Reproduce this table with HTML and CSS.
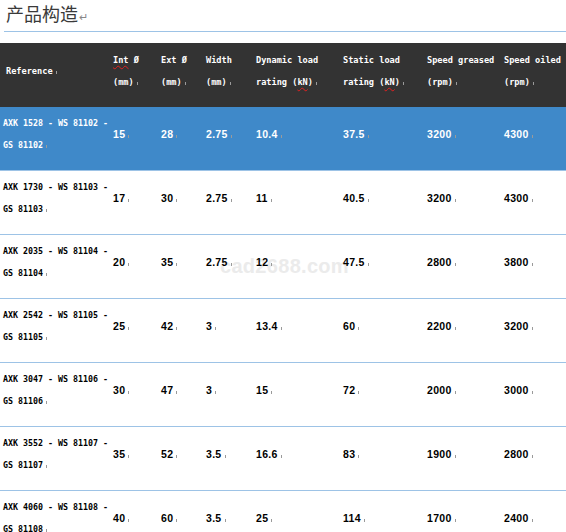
FILE: index.html
```html
<!DOCTYPE html>
<html lang="zh">
<head>
<meta charset="utf-8">
<link rel="stylesheet" href="styles.css">
</head>
<body>
<div class="page">
  <div class="title">产品构造<span class="ret">↵</span></div>
  <table class="spec">
    <colgroup>
      <col style="width:110px"><col style="width:48px"><col style="width:45px"><col style="width:50px"><col style="width:87px"><col style="width:84px"><col style="width:77px"><col>
    </colgroup>
    <thead>
      <tr>
        <th class="ref">Reference<span class="m"></span></th>
        <th><span class="sp">Int</span> Ø<br>(mm)<span class="m"></span></th>
        <th>Ext Ø<br>(mm)<span class="m"></span></th>
        <th>Width<br>(mm)<span class="m"></span></th>
        <th>Dynamic load<br>rating (<span class="sp">kN</span>)<span class="m"></span></th>
        <th>Static load<br>rating (<span class="sp">kN</span>)<span class="m"></span></th>
        <th>Speed greased<br>(rpm)<span class="m"></span></th>
        <th>Speed oiled<br>(rpm)<span class="m"></span></th>
      </tr>
    </thead>
    <tbody>
      <tr class="sel">
        <td class="ref">AXK 1528 - WS 81102 -<br>GS 81102<span class="m"></span></td>
        <td>15<span class="m"></span></td><td>28<span class="m"></span></td><td>2.75<span class="m"></span></td><td>10.4<span class="m"></span></td><td>37.5<span class="m"></span></td><td>3200<span class="m"></span></td><td>4300<span class="m"></span></td>
      </tr>
      <tr>
        <td class="ref">AXK 1730 - WS 81103 -<br>GS 81103<span class="m"></span></td>
        <td>17<span class="m"></span></td><td>30<span class="m"></span></td><td>2.75<span class="m"></span></td><td>11<span class="m"></span></td><td>40.5<span class="m"></span></td><td>3200<span class="m"></span></td><td>4300<span class="m"></span></td>
      </tr>
      <tr>
        <td class="ref">AXK 2035 - WS 81104 -<br>GS 81104<span class="m"></span></td>
        <td>20<span class="m"></span></td><td>35<span class="m"></span></td><td>2.75<span class="m"></span></td><td>12<span class="m"></span></td><td>47.5<span class="m"></span></td><td>2800<span class="m"></span></td><td>3800<span class="m"></span></td>
      </tr>
      <tr>
        <td class="ref">AXK 2542 - WS 81105 -<br>GS 81105<span class="m"></span></td>
        <td>25<span class="m"></span></td><td>42<span class="m"></span></td><td>3<span class="m"></span></td><td>13.4<span class="m"></span></td><td>60<span class="m"></span></td><td>2200<span class="m"></span></td><td>3200<span class="m"></span></td>
      </tr>
      <tr>
        <td class="ref">AXK 3047 - WS 81106 -<br>GS 81106<span class="m"></span></td>
        <td>30<span class="m"></span></td><td>47<span class="m"></span></td><td>3<span class="m"></span></td><td>15<span class="m"></span></td><td>72<span class="m"></span></td><td>2000<span class="m"></span></td><td>3000<span class="m"></span></td>
      </tr>
      <tr>
        <td class="ref">AXK 3552 - WS 81107 -<br>GS 81107<span class="m"></span></td>
        <td>35<span class="m"></span></td><td>52<span class="m"></span></td><td>3.5<span class="m"></span></td><td>16.6<span class="m"></span></td><td>83<span class="m"></span></td><td>1900<span class="m"></span></td><td>2800<span class="m"></span></td>
      </tr>
      <tr>
        <td class="ref">AXK 4060 - WS 81108 -<br>GS 81108<span class="m"></span></td>
        <td>40<span class="m"></span></td><td>60<span class="m"></span></td><td>3.5<span class="m"></span></td><td>25<span class="m"></span></td><td>114<span class="m"></span></td><td>1700<span class="m"></span></td><td>2400<span class="m"></span></td>
      </tr>
    </tbody>
  </table>
  <div class="wm">cad2688.com</div>
</div>
</body>
</html>
```

FILE: styles.css
```css
html, body {
  margin: 0;
  padding: 0;
  background: #ffffff;
}
.page {
  position: relative;
  width: 566px;
  height: 532px;
  overflow: hidden;
}
.title {
  height: 32px;
  margin-left: 4px;
  padding-left: 2px;
  border-bottom: 1px solid #9dc3e6;
  box-sizing: border-box;
  font-family: "Noto Sans CJK SC", sans-serif;
  font-size: 18px;
  line-height: 26px;
  color: #3a3a3a;
  margin-bottom: 11px;
}
.title .ret {
  font-size: 11px;
  color: #888;
  margin-left: 1px;
}
.spec {
  position: relative;
  z-index: 1;
  border-collapse: collapse;
  table-layout: fixed;
  width: 566px;
  font-family: "DejaVu Sans Mono", monospace;
  font-weight: bold;
  font-size: 8.6px;
}
.spec th {
  background: #333333;
  color: #ffffff;
  text-align: left;
  vertical-align: middle;
  height: 64px;
  box-sizing: border-box;
  padding: 0 2px 8px 3px;
  line-height: 22px;
  white-space: nowrap;
  font-weight: bold;
}
.spec th.ref {
  padding-left: 6px;
}
.spec td {
  height: 62.6px;
  box-sizing: border-box;
  padding: 5px 2px 14px 3px;
  vertical-align: middle;
  line-height: 22px;
  white-space: nowrap;
  color: #000;
  border-bottom: 1px solid #9dc3e6;
  font-family: "Liberation Sans", Arial, sans-serif;
  font-size: 10.5px;
  letter-spacing: 0.3px;
}
.spec td.ref {
  font-family: "DejaVu Sans Mono", monospace;
  font-size: 8.3px;
  letter-spacing: 0;
  padding-left: 3px;
}
.spec tr.sel td {
  background: #3f89c9;
  color: #ffffff;
  height: 62px;
}
.sp {
  text-decoration: underline wavy #e02020;
  text-decoration-thickness: 1px;
  text-underline-offset: 2px;
}
.m {
  display: inline-block;
  width: 2px;
  height: 3px;
  margin-left: 1px;
  border-right: 1px solid #9a9a9a;
  vertical-align: baseline;
}
.wm {
  position: absolute;
  z-index: 0;
  left: 220px;
  top: 255px;
  font-family: "Liberation Sans", Arial, sans-serif;
  font-weight: bold;
  font-size: 20px;
  color: #ebebeb;
  letter-spacing: 0.3px;
  pointer-events: none;
}
```
